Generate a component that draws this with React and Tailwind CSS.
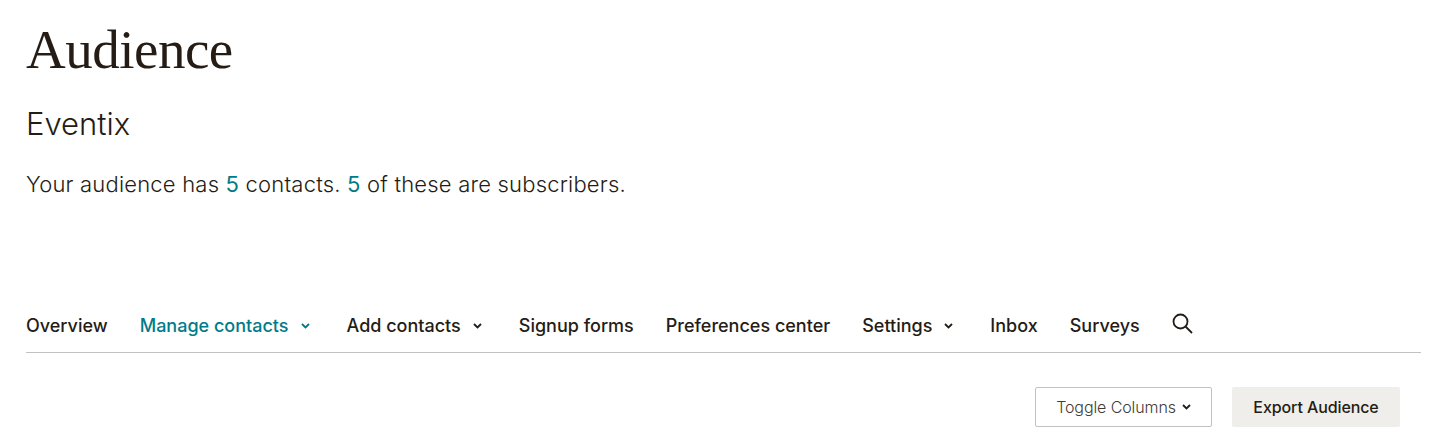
import React from 'react';

const sans = "font-['Inter','Noto_Sans',sans-serif]";

const Chevron = ({ className = '' }) => (
  <svg className={className} width="9" height="6" viewBox="0 0 9 6" fill="none" stroke="currentColor" strokeWidth="1.8">
    <path d="M1 1 L4.5 4.5 L8 1" />
  </svg>
);

const navItems = [
  { label: 'Overview' },
  { label: 'Manage contacts', menu: true, active: true },
  { label: 'Add contacts', menu: true },
  { label: 'Signup forms' },
  { label: 'Preferences center' },
  { label: 'Settings', menu: true },
  { label: 'Inbox' },
  { label: 'Surveys' },
];

export default function App() {
  return (
    <div className={`w-[1432px] h-[433px] overflow-hidden bg-white pl-[26px] pr-[11px] text-[#241c15] ${sans}`}>
      <h1 className="pt-[20px] font-['Liberation_Serif',serif] text-[55px] leading-[60px] tracking-[-0.5px]">Audience</h1>
      <h2 className="mt-[26px] text-[31px] leading-[36px] font-light">Eventix</h2>
      <p className="mt-[27px] text-[22px] leading-[30px] font-light tracking-[0.2px]">
        Your audience has <a className="text-[#007c89] font-normal">5</a> contacts.{' '}
        <a className="text-[#007c89] font-normal">5</a> of these are subscribers.
      </p>

      <nav className="mt-[115px] flex h-[39px] items-start gap-[32px] border-b border-[#c1c1c1]">
        {navItems.map((item) => (
          <a
            key={item.label}
            className={`flex shrink-0 items-center gap-[12px] text-[18px] leading-[24px] font-medium whitespace-nowrap ${item.menu ? 'pr-[5px]' : ''} ${item.active ? 'text-[#007c89]' : ''}`}
          >
            {item.label}
            {item.menu && <Chevron />}
          </a>
        ))}
        <svg className="-mt-[1px] shrink-0" width="21" height="21" viewBox="0 0 21 21" fill="none" stroke="currentColor" strokeWidth="1.8">
          <circle cx="8.5" cy="8.5" r="7" />
          <path d="M13.5 13.5 L20 20" />
        </svg>
      </nav>

      <div className="mt-[34px] mr-[21px] flex justify-end gap-[20px]">
        <button className="flex h-[40px] w-[177px] items-center justify-center gap-[6px] rounded-[2px] border border-[#c1c1c1] bg-white text-[16px] font-light tracking-[-0.1px] text-[#403b37]">
          Toggle Columns
          <Chevron className="text-[#241c15]" />
        </button>
        <button className="h-[40px] w-[168px] rounded-[2px] bg-[#efeeea] text-[16px] font-medium tracking-[-0.1px]">
          Export Audience
        </button>
      </div>
    </div>
  );
}
